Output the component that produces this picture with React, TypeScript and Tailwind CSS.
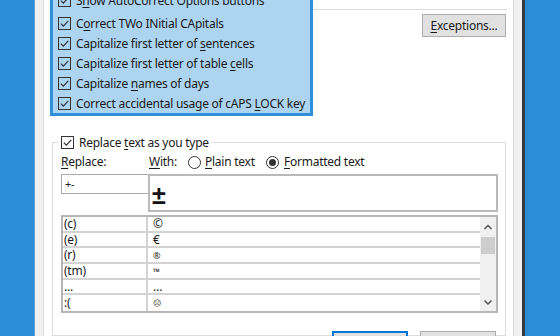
import React from "react";

const U = ({ children }: { children: React.ReactNode }) => (
  <span className="underline underline-offset-[2px] decoration-1">{children}</span>
);

const Check = ({ transparent }: { transparent?: boolean }) => (
  <div
    className={
      "w-[13px] h-[13px] border border-[#333333] flex items-center justify-center shrink-0 " +
      (transparent ? "bg-transparent" : "bg-white")
    }
  >
    <svg width="11" height="11" viewBox="0 0 11 11">
      <path d="M1.8 5.6 L4.3 8.1 L9.3 2.8" fill="none" stroke="#333333" strokeWidth="1.2" />
    </svg>
  </div>
);

const Radio = ({ checked }: { checked?: boolean }) => (
  <div className="w-[13px] h-[13px] rounded-full border border-[#333333] bg-white flex items-center justify-center shrink-0">
    {checked && <div className="w-[7px] h-[7px] rounded-full bg-[#333333]" />}
  </div>
);

const CheckRow = ({ children, className = "" }: { children: React.ReactNode; className?: string }) => (
  <div className={"h-[20px] flex items-center gap-[5px] " + className}>
    <Check transparent />
    <span className="whitespace-nowrap pt-px">{children}</span>
  </div>
);

const rows: { k: string; v: string; h: string; vc?: string }[] = [
  { k: "(c)", v: "©", h: "h-[16px]" },
  { k: "(e)", v: "€", h: "h-[15px]" },
  { k: "(r)", v: "®", h: "h-[16px]", vc: "text-[9px]" },
  { k: "(tm)", v: "™", h: "h-[16px]", vc: "text-[9px]" },
  { k: "...", v: "…", h: "h-[15px]" },
  { k: ":(", v: "☹", h: "h-[16px]", vc: "text-[8px]" },
];

export default function App() {
  return (
    <div className="w-[560px] h-[336px] overflow-hidden flex bg-[#2b8dd5] font-['Noto_Sans',sans-serif] text-[12px] tracking-[-0.25px] text-[#1a1a1a]">
      <div className="w-[34px] shrink-0" />
      <div className="w-[491px] shrink-0 flex bg-[#f0f0f0] border-l border-[#5f9fd6]">
        <div className="w-[8px] shrink-0" />
        <div className="w-[471px] shrink-0 bg-white border-x border-[#dadada] flex flex-col">
          {/* top section */}
          <div className="flex mt-[-13px]">
            <div className="ml-[6px] w-[263px] border-[3px] border-[#2f8fd8] bg-[#add5f2] pl-[5px] flex flex-col">
              <CheckRow className="mb-[3px]">
                S<U>h</U>ow AutoCorrect Options buttons
              </CheckRow>
              <CheckRow>
                C<U>o</U>rrect TWo INitial CApitals
              </CheckRow>
              <CheckRow>
                Capitalize first letter of <U>s</U>entences
              </CheckRow>
              <CheckRow>
                Capitalize first letter of table <U>c</U>ells
              </CheckRow>
              <CheckRow>
                Capitalize <U>n</U>ames of days
              </CheckRow>
              <CheckRow>
                Correct accidental usage of cAPS <U>L</U>OCK key
              </CheckRow>
            </div>
            <div className="w-[194px] flex flex-col">
              <div className="mt-[22px] h-px bg-[#dcdcdc]" />
              <div className="mt-[4px] flex justify-end pr-px">
                <div className="w-[84px] h-[23px] bg-[#e1e1e1] border border-[#adadad] flex items-center justify-center">
                  <span>
                    <U>E</U>xceptions...
                  </span>
                </div>
              </div>
            </div>
          </div>

          {/* group box */}
          <fieldset className="ml-[8px] mr-[7px] mt-[16px] border border-[#dcdcdc] pl-[5px] pr-[7px] flex-1 min-h-0">
            <legend className="px-[3px]">
              <div className="h-[20px] flex items-center gap-[5px]">
                <Check />
                <span className="whitespace-nowrap pt-px">
                  Replace <U>t</U>ext as you type
                </span>
              </div>
            </legend>
            <div className="pl-[3px] flex flex-col">
              <div className="h-[20px] flex items-center">
                <span className="w-[88px] shrink-0">
                  <U>R</U>eplace:
                </span>
                <span className="w-[39px] shrink-0">
                  <U>W</U>ith:
                </span>
                <Radio />
                <span className="ml-[4px] w-[61px] shrink-0">
                  <U>P</U>lain text
                </span>
                <Radio checked />
                <span className="ml-[5px]">
                  <U>F</U>ormatted text
                </span>
              </div>
              <div className="mt-[2px] flex items-start">
                <div className="w-[88px] h-[20px] border border-[#a9a9a9] shrink-0 flex items-center pl-[3px] text-[11px]">
                  +-
                </div>
                <div className="-ml-px w-[350px] h-[38px] border-2 border-[#b9b9b9] shrink-0 flex items-end pl-[2px] overflow-hidden">
                  <span className="font-['Liberation_Sans',sans-serif] text-[25px] leading-[29px] font-bold text-[#111111]">
                    ±
                  </span>
                </div>
              </div>
              <div className="mt-[3px] w-[437px] h-[98px] border-2 border-[#b6b6b6] flex">
                <div className="flex-1 flex flex-col">
                  {rows.map((r, i) => (
                    <div
                      key={i}
                      className={"flex " + r.h + (i < rows.length - 1 ? " border-b-2 border-[#d3d3d3]" : "")}
                    >
                      <div className="w-[85px] border-r-2 border-[#d3d3d3] pl-[1px] flex items-center leading-none">
                        {r.k}
                      </div>
                      <div className={"pl-[5px] flex items-center leading-none " + (r.vc ?? "")}>{r.v}</div>
                    </div>
                  ))}
                </div>
                <div className="w-[16px] bg-[#f0f0f0] flex flex-col items-center">
                  <svg width="10" height="18" viewBox="0 0 10 18" className="mt-[2px]">
                    <path d="M1.5 10 L5 6.5 L8.5 10" fill="none" stroke="#505050" strokeWidth="1.4" />
                  </svg>
                  <div className="w-[14px] h-[17px] bg-[#cdcdcd]" />
                  <div className="flex-1" />
                  <svg width="10" height="18" viewBox="0 0 10 18">
                    <path d="M1.5 7.5 L5 11 L8.5 7.5" fill="none" stroke="#505050" strokeWidth="1.4" />
                  </svg>
                </div>
              </div>
              <div className="mt-[18px] flex justify-end gap-[12px] pr-[2px]">
                <div className="w-[76px] h-[23px] bg-[#e1e1e1] border-2 border-[#0078d7]" />
                <div className="w-[76px] h-[23px] bg-[#e1e1e1] border border-[#adadad]" />
              </div>
            </div>
          </fieldset>
        </div>
        <div className="w-[8px] shrink-0" />
        <div className="w-[3px] shrink-0 bg-[#333a42]" />
      </div>
      <div className="flex-1" />
    </div>
  );
}
